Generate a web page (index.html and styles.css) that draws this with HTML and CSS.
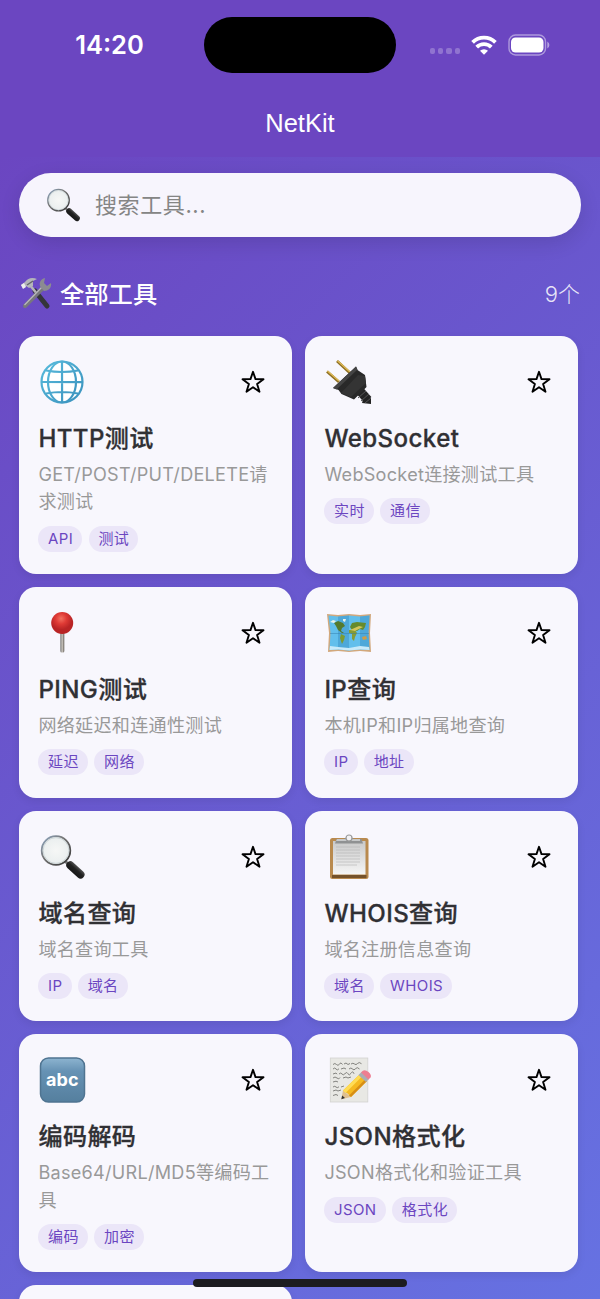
FILE: index.html
```html
<!DOCTYPE html>
<html lang="zh-CN">
<head>
  <meta charset="UTF-8">
  <meta name="viewport" content="width=device-width, initial-scale=1.0">
  <title>NetKit</title>
  <link rel="stylesheet" href="styles.css">
</head>
<body>
  <svg class="defs" width="0" height="0">
    <defs>
      <linearGradient id="rim" x1="0" y1="0" x2="1" y2="1">
        <stop offset="0" stop-color="#8fa9c4"/><stop offset=".4" stop-color="#777"/><stop offset="1" stop-color="#333"/>
      </linearGradient>
      <linearGradient id="grip" x1="0" y1="1" x2="1" y2="0">
        <stop offset="0" stop-color="#111"/><stop offset=".55" stop-color="#222"/><stop offset="1" stop-color="#777"/>
      </linearGradient>
      <radialGradient id="lens"><stop offset="0" stop-color="#f6f7f6"/><stop offset="1" stop-color="#e9eeee"/></radialGradient>
      <linearGradient id="ocean" x1="0" y1="0" x2="1" y2="1">
        <stop offset="0" stop-color="#58bbdc"/><stop offset="1" stop-color="#3a91bd"/>
      </linearGradient>
      <radialGradient id="red" cx=".45" cy=".3"><stop offset="0" stop-color="#f2705f"/><stop offset=".5" stop-color="#df3a35"/><stop offset="1" stop-color="#b92425"/></radialGradient>
      <linearGradient id="steel"><stop offset="0" stop-color="#777"/><stop offset=".5" stop-color="#c9c4bd"/><stop offset="1" stop-color="#625d56"/></linearGradient>
      <linearGradient id="blue" x1="0" y1="0" x2="0" y2="1"><stop offset="0" stop-color="#8db4d0"/><stop offset=".3" stop-color="#6692b4"/><stop offset="1" stop-color="#557f9e"/></linearGradient>
      <linearGradient id="paper" x1="0" y1="0" x2="0" y2="1"><stop offset="0" stop-color="#c9c9c9"/><stop offset="1" stop-color="#f5f5f5"/></linearGradient>
    </defs>
    <symbol id="star" viewBox="0 0 24 24">
      <path d="M12 1.800 14.500 9.100 22.500 9.300 16.100 14 18.500 21.700 12 17.200 5.500 21.700 7.900 14 1.500 9.300 9.500 9.100Z" fill="none" stroke="#000" stroke-width="1.900" stroke-linejoin="round"/>
    </symbol>
    <symbol id="magnifier" viewBox="0 0 48 48">
      <path d="M27 28l4 4" stroke="#777" stroke-width="3"/>
      <path d="M32.300 32.300 42.500 41.500" stroke="url(#grip)" stroke-width="8" stroke-linecap="round"/>
      <circle cx="18" cy="17.500" r="14.300" fill="url(#lens)" stroke="url(#rim)" stroke-width="1.800"/>
      <circle cx="18" cy="17.500" r="12.900" fill="none" stroke="#c5cfd2" stroke-width=".8"/>
    </symbol>
  </svg>

  <div class="status-bar">
    <div class="time">14:20</div>
    <div class="island"></div>
    <div class="signals">
      <div class="dots"><i></i><i></i><i></i><i></i></div>
      <svg class="wifi" viewBox="0 0 26 20">
        <g fill="none" stroke="#fff" stroke-width="3.800">
          <path d="M1.600 7.400a16.200 16.200 0 0 1 22.800 0"/>
          <path d="M5.700 12.200a10.300 10.300 0 0 1 14.600 0"/>
        </g>
        <path d="M13 19.800 9 15.800a5.700 5.700 0 0 1 8 0Z" fill="#fff"/>
      </svg>
      <svg class="battery" viewBox="0 0 42 22">
        <rect x="1" y="1" width="36.500" height="20" rx="6.500" fill="none" stroke="#fff" stroke-opacity=".45" stroke-width="1.400"/>
        <rect x="3" y="3.500" width="32.500" height="15" rx="4.500" fill="#fff"/>
        <path d="M39.300 7.500a4 4 0 0 1 0 7Z" fill="#fff" fill-opacity=".5"/>
      </svg>
    </div>
  </div>
  <header class="nav">NetKit</header>

  <main class="page">
    <div class="search">
      <svg class="search-icon"><use href="#magnifier"/></svg>
      <span>搜索工具...</span>
    </div>

    <div class="section-head">
      <svg class="tools" viewBox="0 0 32 34">
        <path d="M15 15 27 30" stroke="#35353b" stroke-width="5" stroke-linecap="round"/>
        <path d="M9 8 18 19" stroke="#b5b5b8" stroke-width="2.500"/>
        <path d="M5 30 23 12" stroke="#77777c" stroke-width="4" stroke-linecap="round"/>
        <path d="M4.500 29 22 11" stroke="#b9b9bd" stroke-width="1.200"/>
        <path d="M20.500 11C18.500 7 20.500 3 25 2l-1 5 3 3 4-3c1 5-3 8-7 8Z" fill="#8b8b91"/>
        <path d="M1 9 5 6c3-4 7-5 12-3l-4 2 0 5-4 2-3-2-3 2Z" fill="#b4b5ba"/>
        <path d="M1 9 3 13 6 11 4 7Z" fill="#eee"/>
        <path d="M7 9 13 5" stroke="#66666c" stroke-width="1.500"/>
      </svg>
      <h2>全部工具</h2>
      <span class="count">9个</span>
    </div>

    <div class="grid">
      <div class="card">
        <div class="card-head">
          <svg class="icon" viewBox="0 0 48 48">
            <circle cx="24" cy="24" r="20.500" fill="#fff"/>
            <g fill="none" stroke="url(#ocean)" stroke-width="2.200">
              <circle cx="24" cy="24" r="20.500"/>
              <ellipse cx="24" cy="24" rx="14" ry="20.500"/>
              <path d="M8 12.500q16 3 32 0M8 35.500q16-3 32 0M24 3.500 24.100 44.500M3.500 24 44.500 24.100"/>
            </g>
          </svg>
          <svg class="star"><use href="#star"/></svg>
        </div>
        <h3>HTTP测试</h3>
        <p>GET/POST/PUT/DELETE请求测试</p>
        <div class="tags"><span>API</span><span>测试</span></div>
      </div>

      <div class="card">
        <div class="card-head">
          <svg class="icon" viewBox="0 0 48 48">
            <path d="M13 3 26 15M3 13.500 15 24" stroke="#8e6f22" stroke-width="2.800"/>
            <path d="M13.500 2.700 26 14M3.500 13 15 23" stroke="#e0bb58" stroke-width="1.200"/>
            <path d="M36 33 44 42" stroke="#252525" stroke-width="9"/>
            <path d="M40 38 47 40V46L38 45Z" fill="#222"/>
            <path d="M9 30 32 8.500 33.500 12 41 17 42.500 29 30 41.500 17.500 36 14.500 32Z" fill="#292929"/>
            <path d="M9 30 32 8.500 33.500 11.500 12.500 31.500Z" fill="#444"/>
            <path d="M17 35 34 17 41 18 42 25 27 39Z" fill="#343434"/>
            <path d="M34 40 42 33M37 43 45 36M41 45 47 40" stroke="#555" stroke-width="1"/>
          </svg>
          <svg class="star"><use href="#star"/></svg>
        </div>
        <h3>WebSocket</h3>
        <p>WebSocket连接测试工具</p>
        <div class="tags"><span>实时</span><span>通信</span></div>
      </div>

      <div class="card">
        <div class="card-head">
          <svg class="icon" viewBox="0 0 48 48">
            <rect x="22.300" y="22" width="4" height="21.500" rx="1.500" fill="url(#steel)"/>
            <circle cx="24.200" cy="14" r="11" fill="url(#red)"/>
          </svg>
          <svg class="star"><use href="#star"/></svg>
        </div>
        <h3>PING测试</h3>
        <p>网络延迟和连通性测试</p>
        <div class="tags"><span>延迟</span><span>网络</span></div>
      </div>

      <div class="card">
        <div class="card-head">
          <svg class="icon" viewBox="0 0 48 48">
            <path d="M3 5 14 6 25 5 36 6 47 5 46 24 47 43 36 42 25 43 14 42 4 43 5 24Z" fill="#d2a87c"/>
            <path d="M4.500 6.500 14 7.500 25 6.500 36 7.500 45.500 6.500 44.500 24 45.500 41 36 40.500 25 41.500 14 40.500 5.500 41 6.500 24Z" fill="#62bfec"/>
            <path d="M14 7.500 25 6.500V41.500L14 40.500ZM36 7.500 45.500 6.500 44.500 24 45.500 41 36 40.500Z" fill="#3a91c5" fill-opacity=".5"/>
            <path d="M6 37 14 38 25 39 36 37 45 38 45.500 41 36 40.500 25 41.500 14 40.500 5.500 41Z" fill="#c8eafa"/>
            <path d="M10 14 14 12 19 14 21 17 18 19 17 22 20 24 18 24 14 21 12 17Z" fill="#547a2e"/>
            <path d="M17 25 21 27 20 31 18 35 16 29Z" fill="#7e9b31"/>
            <path d="M26 18 28 14 33 13 42 14 41 18 39 21 36 20 33 22 28 21Z" fill="#668b2c"/>
            <path d="M25 21 31 21 33 24 31 28 30 32 28 30 28 25 25 24Z" fill="#879c35"/>
            <path d="M26 21 35 17 39 18 31 22Z" fill="#d5c65a"/>
            <path d="M6 13 9 11 12 12 10 14ZM19 10 22 10 21 13 19 12Z" fill="#e8f2ea"/>
            <path d="M38 28 42 27 43 30 39 31Z" fill="#cf9c45"/>
            <path d="M6 24.500H45" stroke="#357fac" stroke-width=".5"/>
          </svg>
          <svg class="star"><use href="#star"/></svg>
        </div>
        <h3>IP查询</h3>
        <p>本机IP和IP归属地查询</p>
        <div class="tags"><span>IP</span><span>地址</span></div>
      </div>

      <div class="card">
        <div class="card-head">
          <svg class="icon"><use href="#magnifier"/></svg>
          <svg class="star"><use href="#star"/></svg>
        </div>
        <h3>域名查询</h3>
        <p>域名查询工具</p>
        <div class="tags"><span>IP</span><span>域名</span></div>
      </div>

      <div class="card">
        <div class="card-head">
          <svg class="icon" viewBox="0 0 48 48">
            <rect x="6" y="5" width="38.500" height="41" rx="2.500" fill="#b98a4e"/>
            <rect x="8" y="42" width="34.500" height="3" fill="#75522a"/>
            <rect x="9" y="8" width="32.500" height="33.500" fill="url(#paper)"/>
            <path d="M12 14H36M12 17H36M12 20H36M12 23H36M12 26H36M12 29H36M12 32H33" stroke="#b4b4b4" stroke-width=".6"/>
            <path d="M11 10.500 12.500 6H20q5-5 10 0h7.500L39 10.500Z" fill="#8f9192"/>
            <path d="M13 6h23v2H12Z" fill="#c6c8c9"/>
            <circle cx="25" cy="5" r="3" fill="#f2f2f4" stroke="#999" stroke-width="1.200"/>
          </svg>
          <svg class="star"><use href="#star"/></svg>
        </div>
        <h3>WHOIS查询</h3>
        <p>域名注册信息查询</p>
        <div class="tags"><span>域名</span><span>WHOIS</span></div>
      </div>

      <div class="card">
        <div class="card-head">
          <svg class="icon" viewBox="0 0 48 48">
            <rect x="2.500" y="2" width="44" height="44" rx="8" fill="url(#blue)" stroke="#4f7491" stroke-width="1.500"/>
            <text x="24.300" y="29.500" class="abc">abc</text>
          </svg>
          <svg class="star"><use href="#star"/></svg>
        </div>
        <h3>编码解码</h3>
        <p>Base64/URL/MD5等编码工具</p>
        <div class="tags"><span>编码</span><span>加密</span></div>
      </div>

      <div class="card">
        <div class="card-head">
          <svg class="icon" viewBox="0 0 48 48">
            <rect x="6.300" y="2" width="37.500" height="44" fill="#e8e8e4" stroke="#d3d3d0" stroke-width=".8"/>
            <g fill="none" stroke="#777773" stroke-width=".9">
              <path d="M9 8.500q2-2 3.500 0t3-.5 3 .5M20 8l2-1 2 1.500 2-1M27 8q2-1.500 3.500 0t3-.5 4 .2"/>
              <path d="M9 13q2-2 3 0t3-.2M17 13l3-1 2 1M25 13q2-2 3.500 0t3-.3 4 .3"/>
              <path d="M9 18l3-1 1 1.200M15 18q2-2 3 0t3-.4 3 .2 3-.5 3 .5M9 22q2-2 4 0t3-.5M19 22l3-1 2 1 3-1"/>
              <path d="M9 26l3-.8 2 .8M9 31q2-1.500 3 0t3-.2M17 31l3-1M9 35l3-1 2 1 3-1M9 39.500l3-1 2 1"/>
            </g>
            <path d="M17.300 43.300 19 34.500 27 41Z" fill="#dfbf8e"/>
            <path d="M17.300 43.300 18.200 39.500 21 42Z" fill="#333"/>
            <path d="M19 34.500 35.500 18.500 43 25 27 41 23.500 37.500Z" fill="#f5b921"/>
            <path d="M19 34.500 35.500 18.500 38 20.500 21.500 37Z" fill="#ffdc54"/>
            <path d="M25 39.500 41 23.500 43 25 27 41Z" fill="#d78e15"/>
            <path d="M34.500 19 37.500 16 45 23 42 26Z" fill="#a9adb4"/>
            <path d="M37 16.500 38.500 15q2.500-2 6 1t2 5.500l-2 2Z" fill="#ed7e91"/>
          </svg>
          <svg class="star"><use href="#star"/></svg>
        </div>
        <h3>JSON格式化</h3>
        <p>JSON格式化和验证工具</p>
        <div class="tags"><span>JSON</span><span>格式化</span></div>
      </div>

      <div class="card"></div>
    </div>
  </main>

  <div class="home-indicator"></div>
</body>
</html>
```
FILE: styles.css
```css
* {
  box-sizing: border-box;
}
body {
  margin: 0;
  height: 1299px;
  overflow: hidden;
  display: flex;
  flex-direction: column;
  font-family: Inter, "Noto Sans CJK SC", sans-serif;
  background-color: #6b46c1;
  color: #fff;
}
svg {
  display: block;
  flex-shrink: 0;
}
.defs {
  position: absolute;
}
.status-bar {
  height: 90px;
  flex-shrink: 0;
  display: grid;
  grid-template-columns: 204px 192px 204px;
  align-items: center;
}
.time {
  padding: 0 0 2px 15px;
  text-align: center;
  font-size: 25.5px;
  font-weight: 600;
}
.island {
  height: 56px;
  border-radius: 28px;
  background: #000;
}
.signals {
  display: flex;
  align-items: center;
  padding-left: 34px;
}
.dots {
  display: flex;
  gap: 3px;
  margin: 12px 11px 0 0;
}
.dots i {
  width: 5.2px;
  height: 6px;
  border-radius: 2px;
  background: rgba(255, 255, 255, 0.25);
}
.wifi {
  width: 26px;
  height: 20px;
}
.battery {
  width: 42px;
  height: 22px;
  margin-left: 11px;
}
.nav {
  height: 67px;
  flex-shrink: 0;
  line-height: 67px;
  text-align: center;
  font-family: "Liberation Sans", Arial, sans-serif;
  font-size: 25.5px;
}
.page {
  flex: 1;
  min-height: 0;
  overflow: hidden;
  padding: 16px 19px 0;
  background: linear-gradient(135deg, #6b46c1 0%, #6672e2 100%);
}
.search {
  height: 64px;
  display: flex;
  align-items: center;
  gap: 14px;
  padding-left: 26px;
  border-radius: 32px;
  background: #f7f5fd;
  box-shadow: 0 6px 20px rgba(0, 0, 0, 0.12);
  color: #858585;
  font-size: 22px;
  letter-spacing: 0.6px;
}
.search span {
  padding-bottom: 5px;
}
.search-icon {
  width: 36px;
  height: 36px;
}
.section-head {
  height: 32px;
  margin: 40px 1px 27px;
  display: flex;
  align-items: center;
}
.tools {
  width: 32px;
  height: 34px;
}
h2 {
  margin: 0 auto 0 8px;
  padding-bottom: 1px;
  font-size: 24.3px;
  font-weight: 500;
}
.count {
  padding-bottom: 2px;
  color: rgba(255, 255, 255, 0.85);
  font-size: 22px;
  font-weight: 300;
}
.grid {
  display: grid;
  grid-template-columns: 273px 273px;
  gap: 13px;
}
.card {
  min-height: 210.7px;
  padding: 19px 19.4px 22px;
  border-radius: 17px;
  background: #f8f7fd;
  box-shadow: 0 3px 8px rgba(0, 0, 0, 0.08);
}
.card-head {
  height: 54px;
  display: flex;
  align-items: center;
  justify-content: space-between;
}
.icon {
  width: 48px;
  height: 48px;
}
.abc {
  fill: #fff;
  font-size: 18px;
  font-weight: 700;
  text-anchor: middle;
}
.star {
  width: 24px;
  height: 24px;
  margin-right: 7.5px;
}
h3 {
  margin: 12px 0 4px;
  color: #303034;
  font-size: 24.1px;
  font-weight: 500;
  line-height: 36px;
  letter-spacing: 0.4px;
  -webkit-text-stroke: 0.3px #303034;
}
.card p {
  margin: 0 -7px 10px 0;
  color: #999;
  font-size: 18.1px;
  line-height: 27.4px;
  letter-spacing: 0.27px;
}
.tags {
  display: flex;
  gap: 6.5px;
}
.tags span {
  height: 26px;
  padding: 0 9.2px 0 9.6px;
  border-radius: 13px;
  background: #ebe6f8;
  color: #6b46c1;
  font-size: 15px;
  line-height: 26px;
  letter-spacing: 0.4px;
}
.home-indicator {
  position: absolute;
  left: 193px;
  top: 1279px;
  width: 214px;
  height: 8px;
  border-radius: 4px;
  background: #1c1c20;
}
```
